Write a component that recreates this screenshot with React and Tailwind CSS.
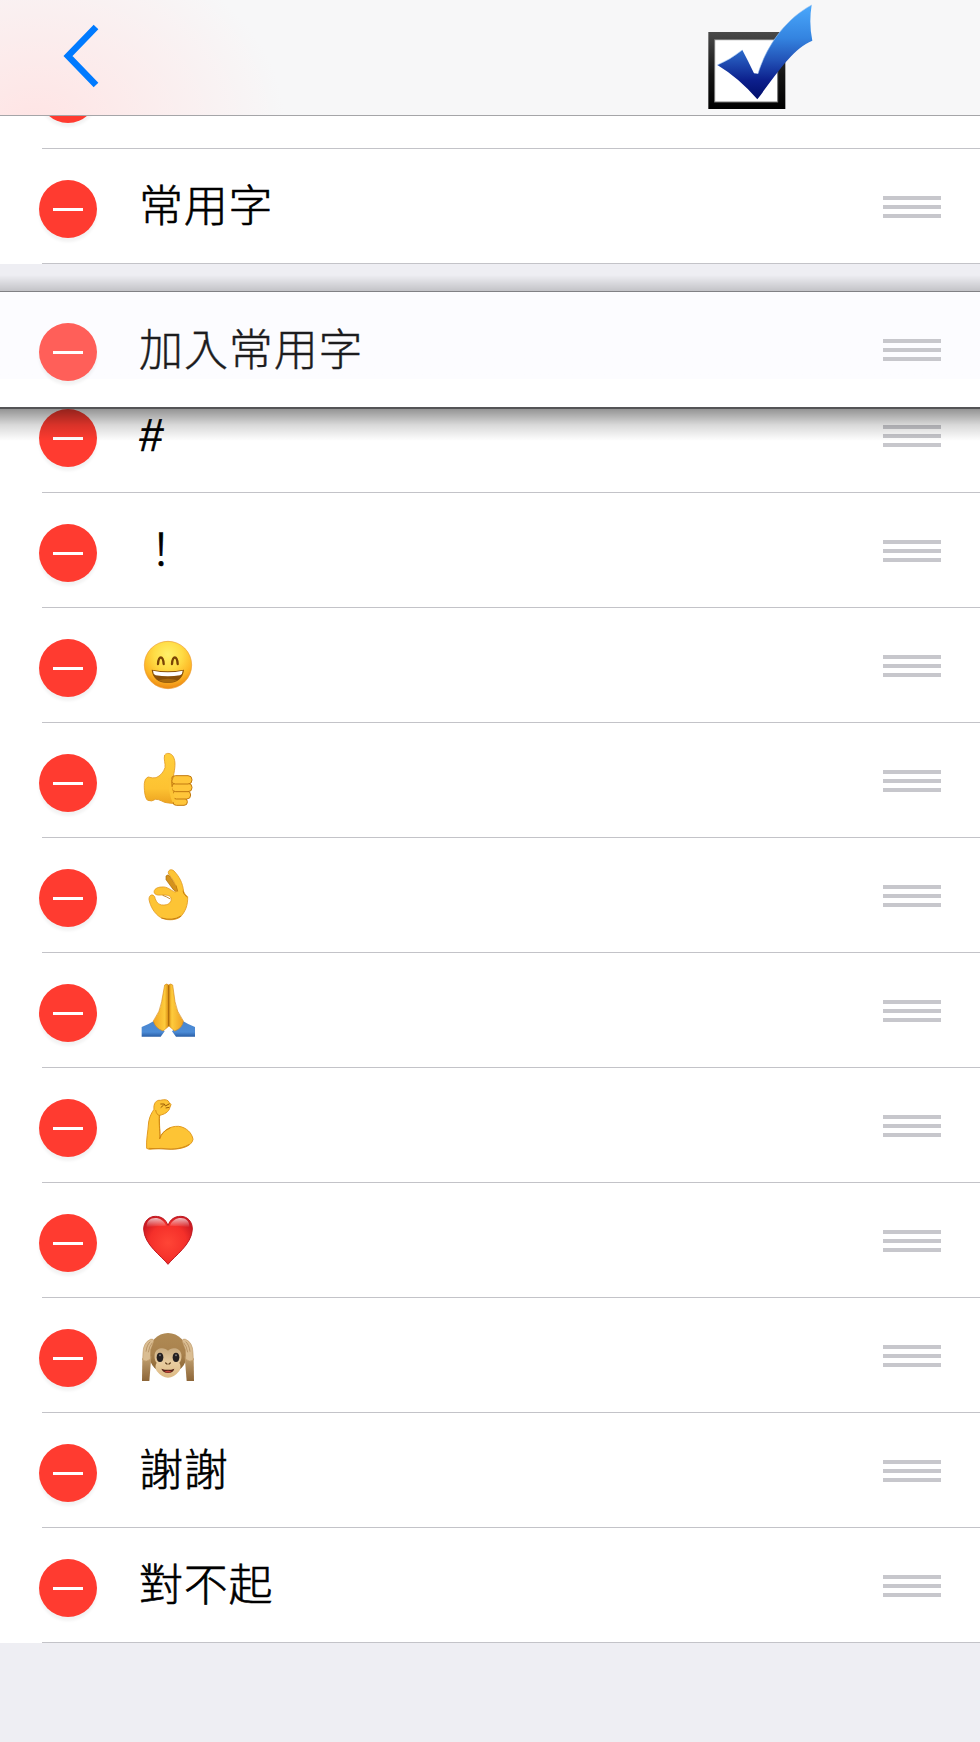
// Each emoji is drawn on its own 168 unit canvas, shown at 56px.
function Emoji({ top, label, children }) {
  return (
    <svg className="size-14 shrink-0" viewBox={`63 ${top} 168 168`} role="img" aria-label={label}>
      {children}
    </svg>
  )
}

function Grin() {
  return (
    <Emoji top={378} label="grin">
      <defs>
        <radialGradient id="face" cx="50%" cy="28%" r="74%">
          <stop offset="0" stopColor="#fff06a" />
          <stop offset="0.4" stopColor="#ffdc45" />
          <stop offset="0.75" stopColor="#fdb524" />
          <stop offset="1" stopColor="#ea8212" />
        </radialGradient>
      </defs>
      <circle cx="144" cy="465" r="71" fill="url(#face)" stroke="#ec9a2c" strokeWidth="2" />
      <path
        d="M114 462 C116 436 129 436 131 462 M156 462 C158 436 171 436 173 462"
        fill="none"
        stroke="#7a4305"
        strokeWidth="7"
        strokeLinecap="round"
      />
      <path d="M95 479 Q144 488 192 479 C190 505 170 519 144 519 C117 519 97 505 95 479Z" fill="#895008" />
      <path d="M99 482 Q144 491 188 482 Q188 492 180 496 Q144 502 107 496 Q99 492 99 482Z" fill="#fff" />
      <path d="M116 511 Q144 502 172 511 Q144 526 116 511Z" fill="#a86a0e" />
    </Emoji>
  )
}

function ThumbsUp() {
  return (
    <Emoji top={63} label="thumbs up">
      <defs>
        <linearGradient id="hand" x1="0" y1="0" x2="0" y2="1">
          <stop offset="0" stopColor="#ffcf3c" />
          <stop offset="0.7" stopColor="#fdc232" />
          <stop offset="1" stopColor="#eda320" />
        </linearGradient>
      </defs>
      <path
        d="M73 160 Q74 145 84 141 Q98 145 108 143 C121 138 131 126 135 113 C137 101 130 87 134 75 C140 67 154 69 160 80 C168 95 165 115 160 139 L166 221 L145 219 C129 219 119 206 106 208 Q96 216 83 211 C74 205 72 175 73 160Z"
        fill="url(#hand)"
        stroke="#e29a20"
        strokeWidth="2.5"
      />
      <g fill="#ffc63a" stroke="#c27a10" strokeWidth="3">
        <rect x="159" y="205" width="43" height="21" rx="10" />
        <rect x="157" y="183" width="55" height="24" rx="12" />
        <rect x="155" y="160" width="61" height="25" rx="12" />
        <rect x="154" y="137" width="62" height="25" rx="12" />
      </g>
      <path d="M149 145 Q150 184 162 216" stroke="#fdc435" strokeWidth="10" fill="none" />
      <path d="M160 140 Q152 154 156 171" stroke="#c27a10" strokeWidth="2.5" fill="none" />
    </Emoji>
  )
}

function OkHand() {
  return (
    <Emoji top={408} label="ok hand">
      <path
        d="M138 438 Q143 432 149 438 L172 473 L172 488 L160 479 L138 449Z"
        fill="#d4921c"
        stroke="#a96a09"
        strokeWidth="2"
      />
      <path
        fillRule="evenodd"
        d="M146 432 C141 421 154 415 162 423 C178 440 188 458 191 485 Q194 494 203 500 C204 526 196 545 181 561 C164 573 136 571 121 562 C103 550 91 530 87 508 C87 494 98 491 104 500 C107 514 115 526 130 525 C143 526 153 519 154 508 C153 496 141 495 129 495 C118 495 108 497 103 489 C99 477 114 471 125 471 C143 469 151 481 165 486 L172 484 C168 463 158 447 146 432Z"
        fill="#fdc435"
        stroke="#e29a20"
        strokeWidth="2.5"
      />
      <path
        d="M189 482 Q188 489 201 502 M128 496 Q140 500 151 507 M168 466 L173 484"
        stroke="#bb7409"
        strokeWidth="2.5"
        fill="none"
      />
      <path d="M124 564 Q158 574 183 558" stroke="#c27a10" strokeWidth="3" fill="none" />
    </Emoji>
  )
}

function Pray() {
  return (
    <Emoji top={63} label="folded hands">
      <defs>
        <linearGradient id="palm" x1="0" y1="0" x2="1" y2="0">
          <stop offset="0" stopColor="#f0a522" />
          <stop offset="0.38" stopColor="#fecb3c" />
          <stop offset="0.5" stopColor="#d98d12" />
          <stop offset="0.62" stopColor="#fecb3c" />
          <stop offset="1" stopColor="#eda023" />
        </linearGradient>
        <linearGradient id="sleeve" x1="0" y1="0" x2="0" y2="1">
          <stop offset="0" stopColor="#4a86cf" />
          <stop offset="0.7" stopColor="#4b8bd6" />
          <stop offset="1" stopColor="#2a5fa6" />
        </linearGradient>
      </defs>
      <path d="M65 201 Q85 194 100 184 L134 214 L122 230 H65Z" fill="url(#sleeve)" />
      <path d="M225 201 Q205 194 190 184 L156 214 L168 230 H225Z" fill="url(#sleeve)" />
      <path
        d="M134 75 Q140 69 146 75 Q152 69 158 75 L165 125 Q169 154 190 183 Q187 205 164 213 L147 198 L129 213 Q106 205 100 183 Q121 154 125 125Z"
        fill="url(#palm)"
        stroke="#d88d1c"
        strokeWidth="2"
      />
      <path d="M146 76 V198" stroke="#b06c0b" strokeWidth="4" />
    </Emoji>
  )
}

function Biceps() {
  return (
    <Emoji top={408} label="flexed biceps">
      <path
        d="M80 565 C78 540 84 516 86 486 C89 468 96 457 102 448 C100 430 109 419 121 421 Q143 415 148 428 Q157 433 150 441 C147 457 132 463 119 466 C117 493 121 519 120 535 C130 509 151 498 176 499 C199 502 216 519 219 538 C216 559 182 569 151 567 L123 565 L88 568Z"
        fill="#fdc435"
        stroke="#e29a20"
        strokeWidth="3"
      />
      <path
        d="M118 465 C116 494 121 520 120 536 M151 504 Q124 515 118 537 M107 450 Q109 465 119 466 M86 565 L154 568 Q190 565 208 553"
        fill="none"
        stroke="#cb820e"
        strokeWidth="2.5"
      />
      <path d="M121 432 H133 L136 438 L149 431 M122 443 L131 435 M137 444 L148 442" fill="none" stroke="#9b5c06" strokeWidth="3" />
    </Emoji>
  )
}

function Heart() {
  return (
    <Emoji top={63} label="heart">
      <defs>
        <radialGradient id="heart" cx="50%" cy="55%" r="58%">
          <stop offset="0" stopColor="#ff4536" />
          <stop offset="0.65" stopColor="#f5302a" />
          <stop offset="1" stopColor="#cb1a22" />
        </radialGradient>
        <linearGradient id="gloss" x1="0" y1="0" x2="0" y2="1">
          <stop offset="0" stopColor="#fff" stopOpacity="0.7" />
          <stop offset="1" stopColor="#fff" stopOpacity="0" />
        </linearGradient>
      </defs>
      <path
        d="M144 223 C126 199 72 164 71 117 C71 94 87 79 106 79 C124 79 138 88 144 107 C150 88 164 79 182 79 C202 79 217 94 217 117 C216 164 162 199 144 223Z"
        fill="url(#heart)"
        stroke="#c01a22"
        strokeWidth="3"
      />
      <path d="M80 112 C77 77 127 75 138 107 Q108 108 80 112Z" fill="url(#gloss)" />
      <path d="M150 107 C161 75 211 77 208 112 Q180 108 150 107Z" fill="url(#gloss)" />
    </Emoji>
  )
}

function Monkey() {
  return (
    <Emoji top={408} label="hear-no-evil monkey">
      <defs>
        <linearGradient id="fur" x1="0" y1="0" x2="0" y2="1">
          <stop offset="0" stopColor="#b08a54" />
          <stop offset="0.5" stopColor="#a9824e" />
          <stop offset="1" stopColor="#86602f" />
        </linearGradient>
        <linearGradient id="muzzle" x1="0" y1="0" x2="0" y2="1">
          <stop offset="0" stopColor="#c9ab80" />
          <stop offset="0.5" stopColor="#e9cda0" />
          <stop offset="1" stopColor="#dcb983" />
        </linearGradient>
        <linearGradient id="arm" x1="0" y1="0" x2="0" y2="1">
          <stop offset="0" stopColor="#c2a171" />
          <stop offset="1" stopColor="#8d6638" />
        </linearGradient>
      </defs>
      <ellipse cx="144" cy="490" rx="58" ry="61" fill="url(#fur)" />
      <path d="M67 505 L94 499 L88 573 H66Z" fill="url(#arm)" />
      <path d="M221 505 L194 499 L200 573 H222Z" fill="url(#arm)" />
      <path
        d="M144 482 C134 470 107 472 104 493 Q102 511 110 518 Q103 530 110 543 Q126 563 144 563 Q162 563 178 543 Q185 530 178 518 Q186 511 184 493 C181 472 154 470 144 482Z"
        fill="url(#muzzle)"
      />
      <ellipse cx="120" cy="502" rx="10" ry="14" fill="#252021" />
      <ellipse cx="168" cy="502" rx="10" ry="14" fill="#252021" />
      <circle cx="120" cy="496" r="3" fill="#78777c" />
      <circle cx="168" cy="496" r="3" fill="#78777c" />
      <path d="M137 519 L141 522 M151 519 L147 522" stroke="#60411f" strokeWidth="4" strokeLinecap="round" />
      <path d="M124 536 Q144 543 163 536 Q159 549 144 549 Q130 549 124 536Z" fill="#542017" />
      <path d="M133 545 Q144 539 155 545 Q144 550 133 545Z" fill="#c4453a" />
      <path d="M69 488 Q70 457 91 448 Q103 445 101 456 L92 479 L91 508 Q78 518 68 510Z" fill="#dabd92" stroke="#b28b57" strokeWidth="1.5" />
      <path d="M219 488 Q218 457 197 448 Q185 445 187 456 L196 479 L197 508 Q210 518 220 510Z" fill="#dabd92" stroke="#b28b57" strokeWidth="1.5" />
      <path d="M78 485 Q81 463 91 455 M85 487 Q88 468 97 458 M210 485 Q207 463 197 455 M203 487 Q200 468 191 458" stroke="#a68051" strokeWidth="2" fill="none" />
    </Emoji>
  )
}

const ROWS = [
  { id: 'hash', text: '#', slanted: true },
  { id: 'bang', text: '！' },
  { id: 'grin', icon: Grin },
  { id: 'thumb', icon: ThumbsUp },
  { id: 'ok', icon: OkHand },
  { id: 'pray', icon: Pray },
  { id: 'biceps', icon: Biceps },
  { id: 'heart', icon: Heart },
  { id: 'monkey', icon: Monkey },
  { id: 'thanks', text: '謝謝' },
  { id: 'sorry', text: '對不起' },
]

function DeleteButton({ faded }) {
  return (
    <button
      className={`mt-[31px] flex size-[58px] shrink-0 items-center justify-center rounded-full shadow-[0_4px_3px_rgba(0,0,0,0.05)] ${
        faded ? 'bg-[#ff5f59]' : 'bg-[#ff3b30]'
      }`}
    >
      <span className="h-[3px] w-[30px] bg-white"></span>
    </button>
  )
}

function DragHandle() {
  return (
    <div className="mt-[47px] flex w-[58px] shrink-0 flex-col gap-[5px]">
      <span className="h-1 bg-[#c7c7cc]"></span>
      <span className="h-1 bg-[#c7c7cc]"></span>
      <span className="h-1 bg-[#c7c7cc]"></span>
    </div>
  )
}

function RowContent({ text, slanted, icon: Icon, faded }) {
  return (
    <div className="flex h-[114px] shrink-0 items-start pr-[39px] pl-[39px]">
      <DeleteButton faded={faded} />
      <div className="ml-[42px] flex flex-1">
        {Icon ? (
          <div className="mt-7 ml-0.5">
            <Icon />
          </div>
        ) : (
          <span
            className={`text-[44px] leading-[64px] font-light ${
              slanted ? 'ml-px origin-center -skew-x-6 scale-x-112' : ''
            } ${
              faded
                ? 'mt-[23px] tracking-[0.9px] text-[#1c1c1e] [-webkit-text-stroke:0.4px_#1c1c1e]'
                : 'mt-[22px] tracking-[0.7px] text-black [-webkit-text-stroke:0.6px_#000]'
            }`}
          >
            {text}
          </span>
        )}
      </div>
      <DragHandle />
    </div>
  )
}

function Row(props) {
  return (
    <li className="bg-white">
      <RowContent {...props} />
      <div className="ml-[42px] h-px bg-[#c3c3c8]"></div>
    </li>
  )
}

function DraggedRow() {
  return (
    <div className="absolute inset-x-0 top-[27px] z-10">
      <div className="absolute inset-x-0 -top-4 h-4 bg-linear-to-t from-black/18 to-transparent"></div>
      <div className="h-[118px] border-t border-b-2 border-t-[#818185] border-b-[#545456] bg-linear-to-b from-[#fcfcff] from-76% to-white to-76%">
        <RowContent text="加入常用字" faded />
      </div>
      <div className="h-8 bg-linear-to-b from-black/42 via-black/15 to-transparent"></div>
    </div>
  )
}

function Header() {
  return (
    <header className="flex h-[116px] shrink-0 items-start justify-between border-b border-[#a5a5a8] bg-[#f7f7f8] bg-[radial-gradient(ellipse_250px_190px_at_35px_125px,#ffe4e4,transparent)] pr-[164px] pl-[60px]">
      <button className="mt-6" aria-label="Back">
        <svg className="h-16 w-10" viewBox="60 24 40 64" fill="none">
          <path d="M96 27 L68 56 L96 85" stroke="#007aff" strokeWidth="6.5" />
        </svg>
      </button>
      <svg className="h-[114px] w-[114px]" viewBox="66 0 342 342">
        <defs>
          <linearGradient id="frame" x1="0" y1="0" x2="0" y2="1">
            <stop offset="0" stopColor="#4a4a4a" />
            <stop offset="0.55" stopColor="#151515" />
            <stop offset="1" stopColor="#000" />
          </linearGradient>
          <linearGradient id="tick" x1="0" y1="0" x2="0" y2="1">
            <stop offset="0" stopColor="#4aa8fc" />
            <stop offset="0.35" stopColor="#3484e0" />
            <stop offset="0.58" stopColor="#2354b8" />
            <stop offset="0.8" stopColor="#0c1f8c" />
            <stop offset="1" stopColor="#000d69" />
          </linearGradient>
        </defs>
        <rect x="85" y="96" width="231" height="231" fill="url(#frame)" />
        <rect x="104" y="119" width="189" height="187" fill="#fff" stroke="#777" strokeWidth="3" />
        <path
          d="M112 195 Q151 179 187 150 Q204 182 222 220 L234 221 C252 160 302 65 395 15 Q386 69 397 122 C340 145 300 208 232 298 Q177 234 112 195Z"
          fill="url(#tick)"
        />
        <path d="M112 195 Q151 179 187 150 M234 221 C252 160 302 65 395 15" fill="none" stroke="#9cc4f2" strokeOpacity="0.6" strokeWidth="3" />
      </svg>
    </header>
  )
}

export default function App() {
  return (
    <div className="flex h-[1742px] w-[980px] flex-col overflow-hidden bg-[#eeeef3] font-['Noto_Sans_CJK_TC',sans-serif]">
      <Header />
      <ul>
        {/* tail of the row that is scrolled under the header */}
        <li className="flex h-[33px] flex-col justify-end overflow-hidden bg-white">
          <RowContent text="" />
          <div className="ml-[42px] h-px shrink-0 bg-[#c3c3c8]"></div>
        </li>
        <Row text="常用字" />
      </ul>
      <div className="relative h-[114px] shrink-0">
        <DraggedRow />
      </div>
      <ul>
        {ROWS.map((row) => (
          <Row key={row.id} {...row} />
        ))}
      </ul>
    </div>
  )
}
